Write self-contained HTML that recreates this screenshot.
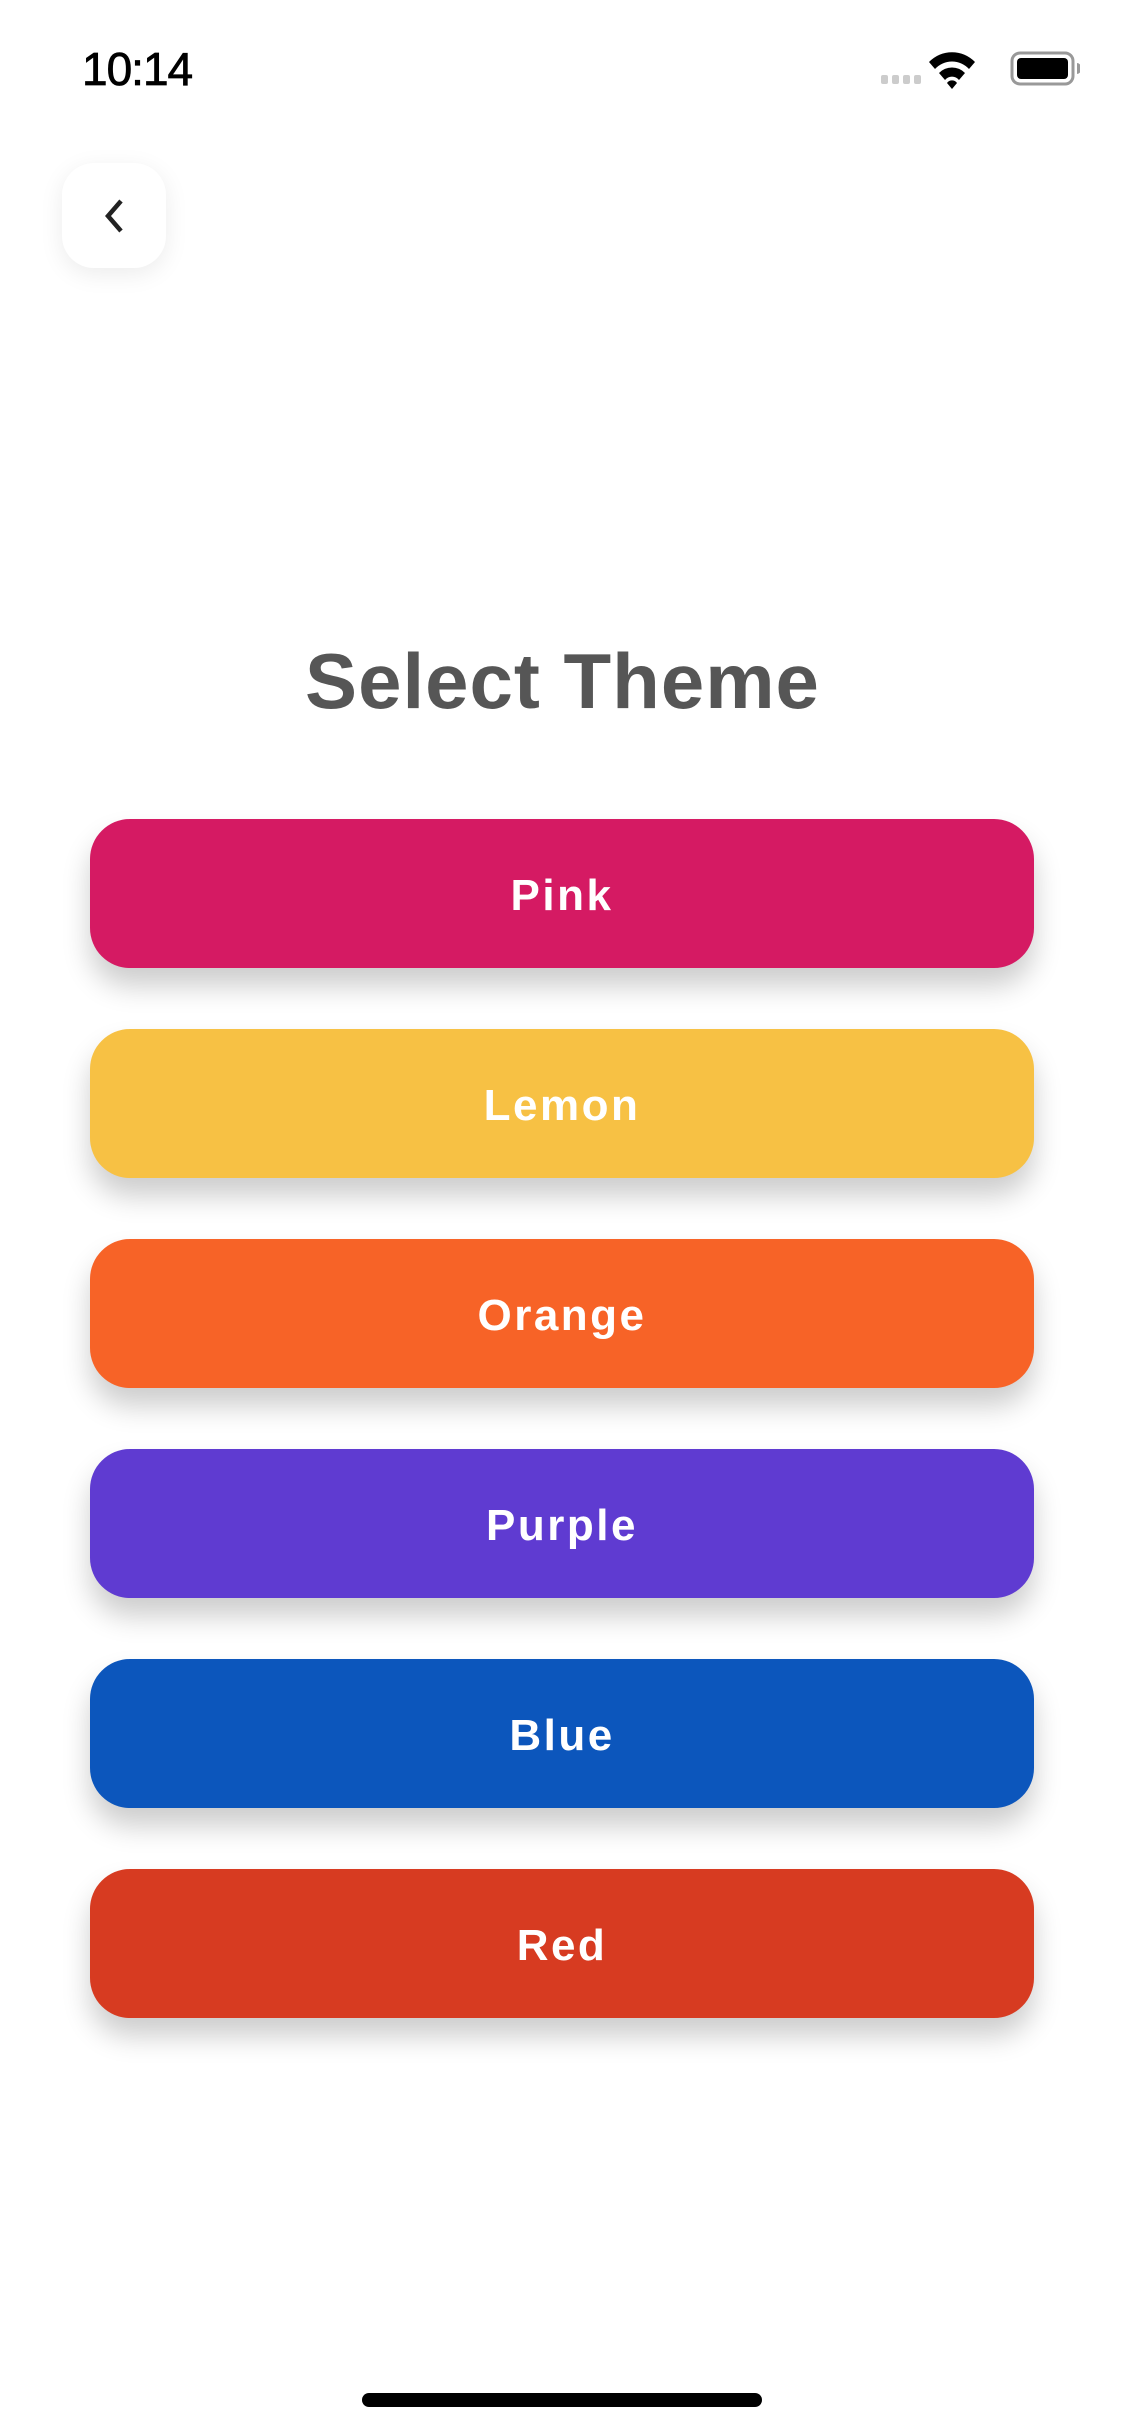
<!DOCTYPE html>
<html><head><meta charset="utf-8"><style>
*{margin:0;padding:0;box-sizing:border-box}
body{width:1125px;height:2436px;background:#fff;position:relative;overflow:hidden;font-family:"Liberation Sans",sans-serif}
.time{position:absolute;left:82px;top:42px;font-size:46px;font-weight:normal;color:#000;letter-spacing:-1px;-webkit-text-stroke:0.8px #000}
.back{position:absolute;left:62px;top:163px;width:104px;height:105px;border-radius:32px;background:#fff;box-shadow:0 6px 24px rgba(0,0,0,0.08)}
.title{position:absolute;top:636px;left:0;width:1125px;text-align:center;font-size:78px;font-weight:bold;color:#565656;letter-spacing:1px}
.btn{position:absolute;left:90px;width:944px;height:149px;border-radius:40px;color:#fff;font-size:44px;font-weight:bold;letter-spacing:2.5px;text-align:center;line-height:153px;box-shadow:0 18px 28px rgba(0,0,0,0.2)}
.home{position:absolute;left:362px;top:2393px;width:400px;height:14px;border-radius:7px;background:#000}
</style></head><body>
<div class="time">10:14</div>
<svg style="position:absolute;left:880px;top:50px" width="200" height="40" viewBox="0 0 200 40">
<g fill="#ccc"><rect x="1" y="25" width="7" height="9" rx="2"/><rect x="12" y="25" width="7" height="9" rx="2"/><rect x="23" y="25" width="7" height="9" rx="2"/><rect x="34" y="25" width="7" height="9" rx="2"/></g>
<path d="M49 12 A32 32 0 0 1 95 12 L89 19 A23 23 0 0 0 55 19 Z M59 23 A18 18 0 0 1 85 23 L79 30 A9 9 0 0 0 65 30 Z M67 33 L72 39 L77 33 A6 6 0 0 0 67 33Z" fill="#000"/>
<rect x="132" y="3" width="61" height="31" rx="8" fill="none" stroke="#999" stroke-width="3"/>
<rect x="137" y="8" width="51" height="21" rx="4" fill="#000"/>
<path d="M197 13 v11 a4 5 0 0 0 0 -11z" fill="#999"/>
</svg>
<div class="back"><svg width="104" height="105" viewBox="0 0 104 105"><path d="M59 38 L46 53 L59 68" fill="none" stroke="#222" stroke-width="4.5"/></svg></div>
<div class="title">Select Theme</div>
<div class="btn" style="top:819px;background:#D51A63">Pink</div>
<div class="btn" style="top:1029px;background:#F7C144">Lemon</div>
<div class="btn" style="top:1239px;background:#F76327">Orange</div>
<div class="btn" style="top:1449px;background:#5F3BD1">Purple</div>
<div class="btn" style="top:1659px;background:#0C56BC">Blue</div>
<div class="btn" style="top:1869px;background:#D73B21">Red</div>
<div class="home"></div>
</body></html>
